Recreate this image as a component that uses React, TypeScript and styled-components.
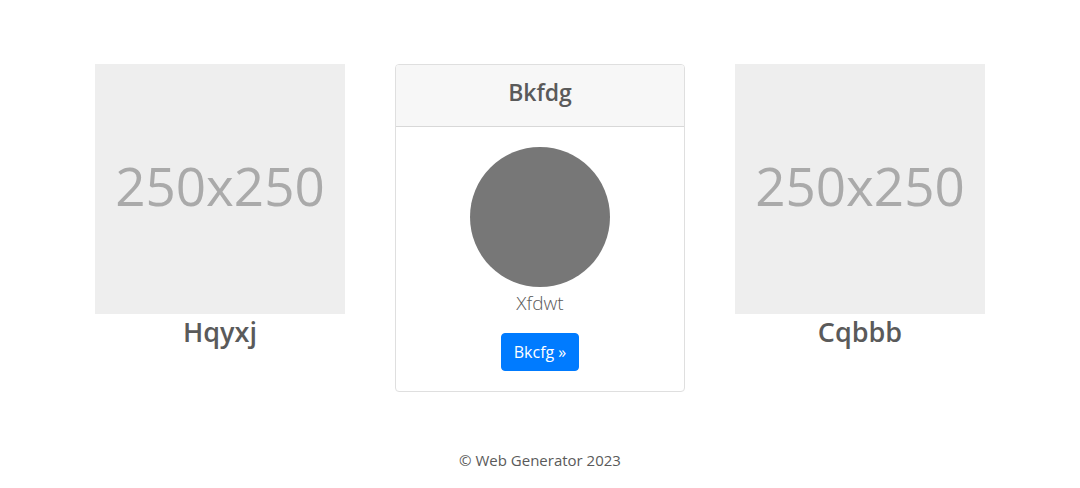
import React from "react";
import styled, { createGlobalStyle } from "styled-components";

const GlobalStyle = createGlobalStyle`
  *, *::before, *::after { box-sizing: border-box; }
  body {
    margin: 0;
    background: #fff;
    color: #5a5a5a;
    font-family: "Open Sans", "Noto Sans", sans-serif;
    font-size: 16px;
    line-height: 24px;
  }
`;

const Page = styled.div`
  padding: 64px 60px 0;
`;

const Columns = styled.main`
  display: grid;
  grid-template-columns: repeat(3, minmax(0, 1fr));
  align-items: start;
  text-align: center;
`;

const Column = styled.section`
  padding: 0 15px;
`;

const Placeholder = styled.svg`
  display: block;
  width: 250px;
  height: 250px;
  margin: 0 auto;
`;

const Title = styled.h2`
  margin: 0;
  font-size: 27px;
  line-height: 36px;
  font-weight: 600;
`;

const Card = styled.article`
  border: 1px solid #dfdfdf;
  border-radius: 4px;
  background: #fff;
  overflow: hidden;
`;

const CardHeader = styled.header`
  padding: 12px 20px 18px;
  border-bottom: 1px solid #d8d8d8;
  background: #f7f7f7;
`;

const CardTitle = styled.h4`
  margin: 0;
  font-size: 23px;
  line-height: 31px;
  font-weight: 600;
`;

const CardBody = styled.div`
  padding: 20px;
`;

const Avatar = styled.div`
  width: 140px;
  height: 140px;
  margin: 0 auto;
  border-radius: 50%;
  background: #777;
`;

const CardText = styled.p`
  margin: 0 0 14px;
  font-size: 19px;
  line-height: 32px;
  font-weight: 300;
`;

const Button = styled.button`
  display: inline-block;
  vertical-align: top;
  padding: 6px 12px;
  border: 1px solid #007bff;
  border-radius: 4px;
  background: #007bff;
  color: #fff;
  font: inherit;
  cursor: pointer;
`;

const Footer = styled.footer`
  padding: 56px 15px 16px;
  text-align: center;
`;

const FooterText = styled.p`
  margin: 0;
  font-size: 15px;
`;

function ImageHolder() {
  return (
    <Placeholder viewBox="0 0 250 250" role="img" aria-label="Placeholder">
      <rect width="250" height="250" fill="#eee" />
      <text x="125" y="142" textAnchor="middle" fontSize="53" fill="#aaa">
        250x250
      </text>
    </Placeholder>
  );
}

export default function App() {
  return (
    <>
      <GlobalStyle />
      <Page>
        <Columns>
          <Column>
            <ImageHolder />
            <Title>Hqyxj</Title>
          </Column>
          <Column>
            <Card>
              <CardHeader>
                <CardTitle>Bkfdg</CardTitle>
              </CardHeader>
              <CardBody>
                <Avatar />
                <CardText>Xfdwt</CardText>
                <Button type="button">Bkcfg »</Button>
              </CardBody>
            </Card>
          </Column>
          <Column>
            <ImageHolder />
            <Title>Cqbbb</Title>
          </Column>
        </Columns>
        <Footer>
          <FooterText>© Web Generator 2023</FooterText>
        </Footer>
      </Page>
    </>
  );
}
